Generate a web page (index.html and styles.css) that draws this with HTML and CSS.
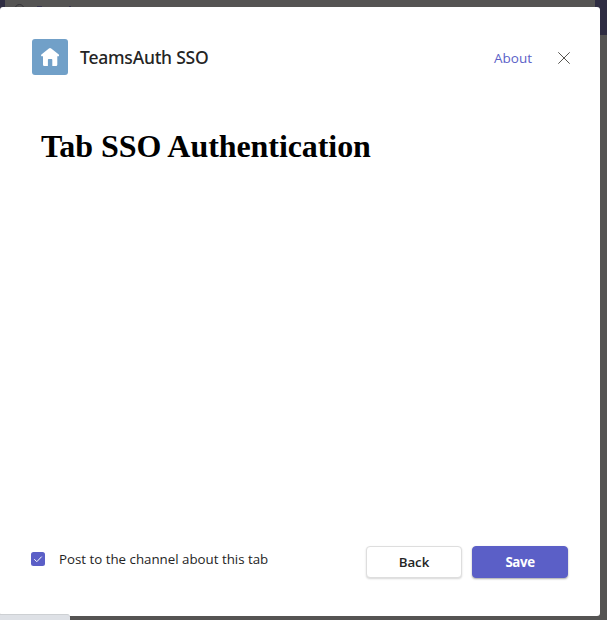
FILE: index.html
```html
<!DOCTYPE html>
<html lang="en">
<head>
<meta charset="utf-8">
<title>TeamsAuth SSO</title>
<link rel="stylesheet" href="styles.css">
</head>
<body>
<div class="backdrop">
  <div class="rail"></div>
  <svg class="hints" width="80" height="7" viewBox="0 0 80 7" fill="none" stroke="#343338"><circle cx="19.5" cy="9" r="4.5"/><path d="M37 6.500h5M69 6.500h2" stroke="#37354c"/></svg>
  <div class="corner"></div>
</div>
<main class="dialog">
  <header class="header">
    <svg class="logo" viewBox="0 0 36 36"><rect width="36" height="36" rx="3" fill="#71a0c8"/><path d="M18 9Q18.600 9 19.200 9.500L26.800 15.500Q27.400 16.200 26.800 17.200H25.300V25.800Q25.300 27 24.100 27H20.300V20.700Q20.300 20 19.600 20H16.600Q15.900 20 15.900 20.700V27H12.200Q11 27 11 25.800V17.200H9.400Q8.600 16.200 9.400 15.500L16.900 9.500Q17.500 9 18 9Z" fill="#fff"/></svg>
    <div class="title">TeamsAuth SSO</div>
    <a class="about">About</a>
    <svg class="close" viewBox="0 0 12 12" fill="none" stroke="#55534f"><path d="M.3.3l11.400 11.400M11.700.3L.3 11.700"/></svg>
  </header>
  <section class="content"><h1>Tab SSO Authentication</h1></section>
  <footer class="footer">
    <label class="option">
      <svg class="check" viewBox="0 0 14 14" fill="none"><rect width="14" height="14" rx="2.500" fill="#5b5fc7"/><path d="M3.300 7.200l2.500 2.500L10.700 4.600" stroke="#fff"/></svg>
      <span class="option-text">Post to the channel about this tab</span>
    </label>
    <button class="button">Back</button>
    <button class="button primary">Save</button>
  </footer>
</main>
<div class="status"></div>
</body>
</html>
```
FILE: styles.css
```css
* { box-sizing: border-box; }
body {
  margin: 0;
  width: 607px;
  height: 620px;
  padding-top: 7px;
  position: relative;
  overflow: hidden;
  background: #555453;
  font-family: "Open Sans", "Noto Sans", sans-serif;
  color: #242424;
}
.backdrop { position: absolute; inset: 0; }
.rail { position: absolute; left: 0; top: 0; width: 5px; height: 10px; background: #2f2d42; }
.hints { position: absolute; left: 0; top: 0; }
.corner { position: absolute; right: 0; top: 0; width: 12px; height: 35px; background: #2f2d42; }
.dialog {
  position: relative;
  display: flex;
  flex-direction: column;
  width: 600px;
  height: 609px;
  padding: 32px 32px 38px 31px;
  background: #fff;
  border-radius: 3px;
}
.header { display: flex; align-items: center; height: 36px; padding-left: 1px; }
.logo { width: 36px; height: 36px; margin-right: 12px; }
.title { flex: 1; font: 500 17.5px/24px "Noto Sans", "Open Sans", sans-serif; letter-spacing: -0.22px; }
.about { font-size: 13.5px; line-height: 20px; color: #5b5fc7; margin-right: 26px; padding-top: 2px; }
.close { width: 12px; height: 12px; margin: 1px -2px 0 0; }
.content { flex: 1; padding: 53px 0 0 10px; }
h1 { margin: 0; font: bold 32px/36px "Liberation Serif", serif; letter-spacing: -0.07px; color: #000; white-space: nowrap; }
.footer { display: flex; align-items: center; height: 32px; gap: 10px; }
.option { display: flex; align-items: center; flex: 1; padding-bottom: 6px; }
.check { width: 14px; height: 14px; margin-right: 14px; }
.option-text { font-size: 13.3px; line-height: 20px; white-space: nowrap; }
.button {
  width: 96px;
  height: 32px;
  padding: 0;
  border: 1px solid #dedede;
  border-radius: 4px;
  background: #fff;
  color: #242424;
  font: 600 13.3px/20px "Open Sans", "Noto Sans", sans-serif;
  letter-spacing: -0.1px;
  box-shadow: 0 1px 2px rgba(0, 0, 0, .16);
}
.primary { background: #5b5fc7; border-color: #5b5fc7; color: #fff; font-weight: 700; letter-spacing: -0.4px; box-shadow: 0 1px 2px rgba(0, 0, 0, .35); }
.status { position: absolute; left: 0; bottom: 0; width: 70px; height: 6px; background: #dee1e6; border-top: 1px solid #cdd0d3; border-top-right-radius: 3px; }
```
